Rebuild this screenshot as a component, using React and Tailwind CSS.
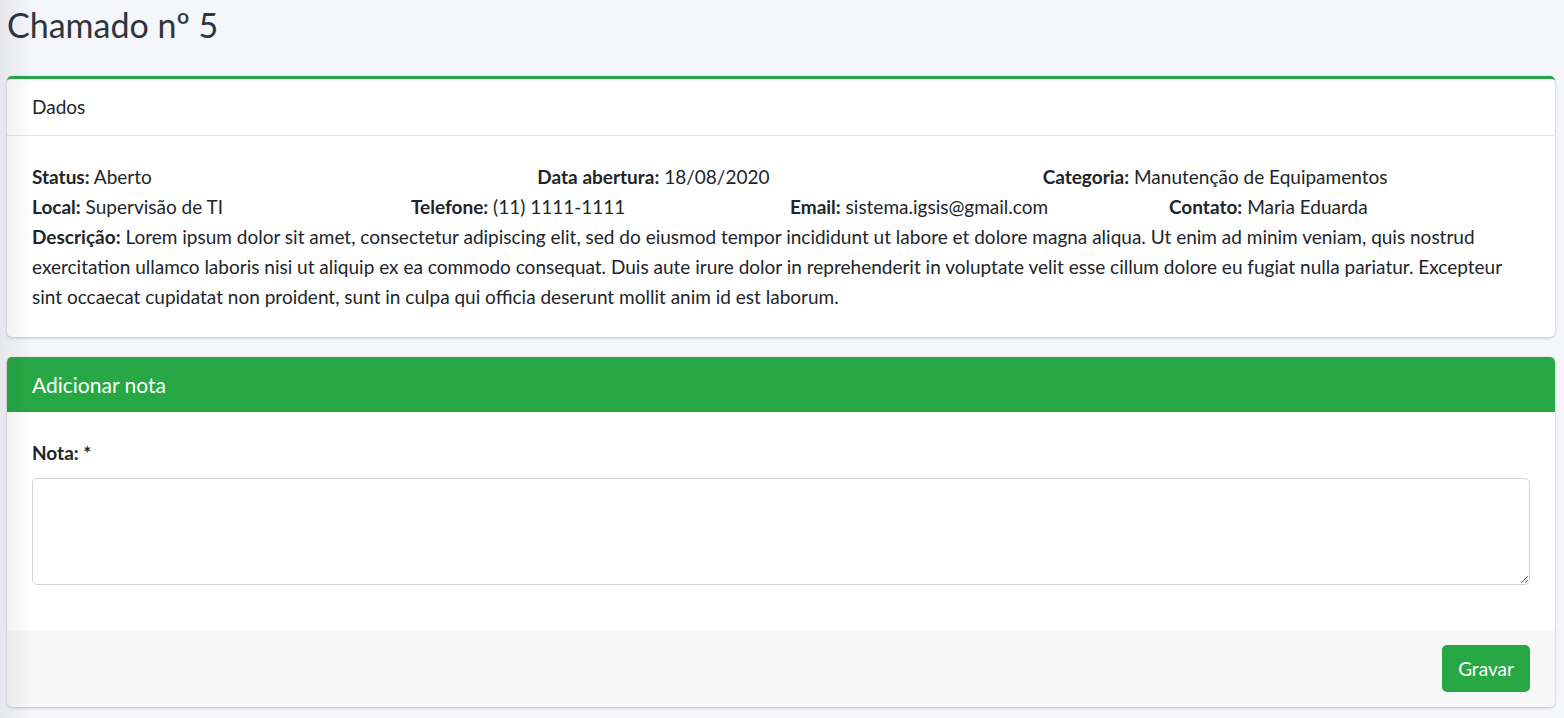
const fields = {
  top: [
    { label: 'Status:', value: 'Aberto' },
    { label: 'Data abertura:', value: '18/08/2020' },
    { label: 'Categoria:', value: 'Manutenção de Equipamentos' },
  ],
  middle: [
    { label: 'Local:', value: 'Supervisão de TI' },
    { label: 'Telefone:', value: '(11) 1111-1111' },
    { label: 'Email:', value: 'sistema.igsis@gmail.com' },
    { label: 'Contato:', value: 'Maria Eduarda' },
  ],
};

const descricao =
  'Lorem ipsum dolor sit amet, consectetur adipiscing elit, sed do eiusmod tempor incididunt ut labore et dolore magna aliqua. Ut enim ad minim veniam, quis nostrud exercitation ullamco laboris nisi ut aliquip ex ea commodo consequat. Duis aute irure dolor in reprehenderit in voluptate velit esse cillum dolore eu fugiat nulla pariatur. Excepteur sint occaecat cupidatat non proident, sunt in culpa qui officia deserunt mollit anim id est laborum.';

function Field({ label, value }) {
  return (
    <p>
      <span className="font-bold">{label}</span> {value}
    </p>
  );
}

export default function App() {
  return (
    <div
      className="relative min-h-screen bg-[#f4f6f9] pb-[10px] pl-[7px] pr-[9px] text-[19px] leading-[30px] text-[#212529]"
      style={{ fontFamily: 'Lato, "Noto Sans", sans-serif' }}
    >
      <h1 className="pt-[3px] text-[34px] leading-[44px] text-[#2f3540]">Chamado nº 5</h1>

      <section className="mt-[29px] overflow-hidden rounded-[5px] border-t-[3px] border-[#28a745] bg-white shadow-[0_0_1px_rgba(0,0,0,0.125),0_1px_3px_rgba(0,0,0,0.2)]">
        <header className="flex h-[57px] items-center border-b border-[#e3e3e3] px-[25px]">
          <h2>Dados</h2>
        </header>
        <div className="px-[25px] pb-[25px] pt-[26px]">
          <div className="grid grid-cols-3 gap-x-[18px]">
            {fields.top.map((f) => (
              <Field key={f.label} {...f} />
            ))}
          </div>
          <div className="grid grid-cols-4 gap-x-[18px]">
            {fields.middle.map((f) => (
              <Field key={f.label} {...f} />
            ))}
          </div>
          <p>
            <span className="font-bold">Descrição:</span> {descricao}
          </p>
        </div>
      </section>

      <section className="mt-[20px] overflow-hidden rounded-[5px] bg-white shadow-[0_0_1px_rgba(0,0,0,0.125),0_1px_3px_rgba(0,0,0,0.2)]">
        <header className="flex h-[55px] items-center bg-[#28a745] px-[25px]">
          <h2 className="text-[21px] text-white">Adicionar nota</h2>
        </header>
        <div className="px-[25px] pb-[25px] pt-[26px]">
          <label className="block font-bold" htmlFor="nota">
            Nota: *
          </label>
          <textarea
            id="nota"
            className="mb-[20px] mt-[10px] block h-[107px] w-full rounded-[5px] border border-[#ced4da] bg-white px-[15px] py-[8px] outline-none"
          />
        </div>
        <footer className="flex justify-end bg-[#f7f7f7] px-[25px] py-[15px]">
          <button className="h-[47px] w-[88px] rounded-[5px] bg-[#28a745] text-white" type="button">
            Gravar
          </button>
        </footer>
      </section>

      <div className="pointer-events-none absolute inset-y-0 left-0 w-[34px] bg-gradient-to-r from-black/[0.06] to-transparent" />
    </div>
  );
}
